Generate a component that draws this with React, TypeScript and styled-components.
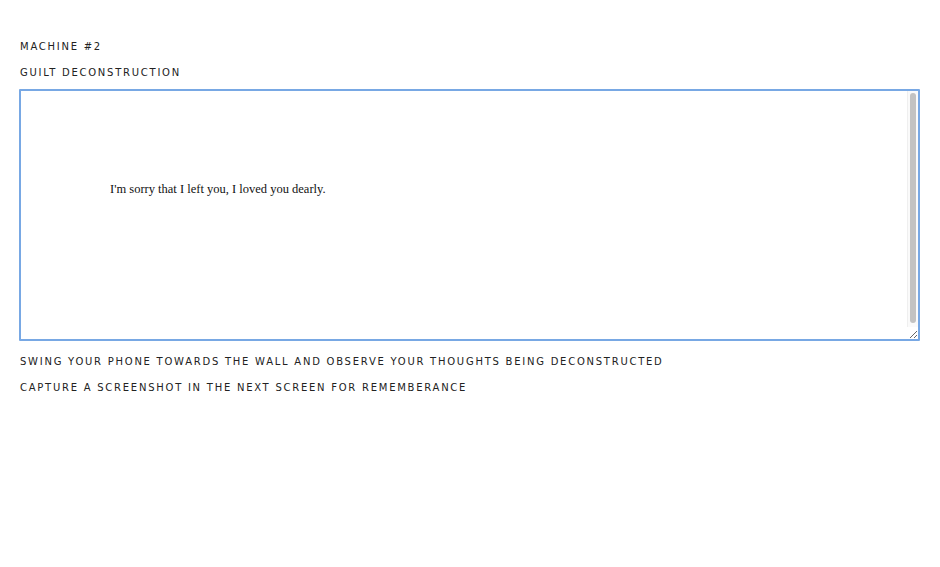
import React from "react";
import styled, { createGlobalStyle } from "styled-components";

const Global = createGlobalStyle`
  html, body { margin: 0; padding: 0; background: #fff; }
`;

const Page = styled.main`
  padding: 40px 20px 0 19px;
  display: flex;
  flex-direction: column;
  font-family: "DejaVu Sans", Verdana, sans-serif;
`;

const Label = styled.p`
  margin: 0;
  height: 26px;
  padding-left: 1px;
  font-size: 10px;
  line-height: 14px;
  letter-spacing: 1.75px;
  color: #222;
  text-transform: uppercase;
`;

const FieldWrap = styled.div`
  position: relative;
  width: 901px;
  height: 252px;
  margin: -3px 0 14px;
`;

const Field = styled.textarea`
  box-sizing: border-box;
  display: block;
  width: 100%;
  height: 100%;
  margin: 0;
  padding: 90px 40px 0 89px;
  border: 2px solid #78a8e4;
  border-radius: 1px;
  outline: none;
  font-family: "Liberation Serif", "Times New Roman", serif;
  font-size: 12.5px;
  line-height: 16px;
  color: #111;
  resize: both;
  overflow: auto;
  caret-color: #000;
  background: #fff;
`;

const Track = styled.div`
  position: absolute;
  top: 2px;
  right: 2px;
  bottom: 14px;
  width: 11px;
  background: #fafafa;
  border-left: 1px solid #efefef;
  box-sizing: border-box;
  padding: 2px 2px 4px 2px;
  pointer-events: none;
`;

const Thumb = styled.div`
  height: 100%;
  background: #c2c2c2;
  border-radius: 4px;
`;

export default function App() {
  return (
    <>
      <Global />
      <Page>
        <Label>Machine #2</Label>
        <Label>Guilt Deconstruction</Label>
        <FieldWrap>
          <Field defaultValue="I'm sorry that I left you, I loved you dearly." autoFocus />
          <Track>
            <Thumb />
          </Track>
        </FieldWrap>
        <Label>Swing your phone towards the wall and observe your thoughts being deconstructed</Label>
        <Label>Capture a screenshot in the next screen for rememberance</Label>
      </Page>
    </>
  );
}
